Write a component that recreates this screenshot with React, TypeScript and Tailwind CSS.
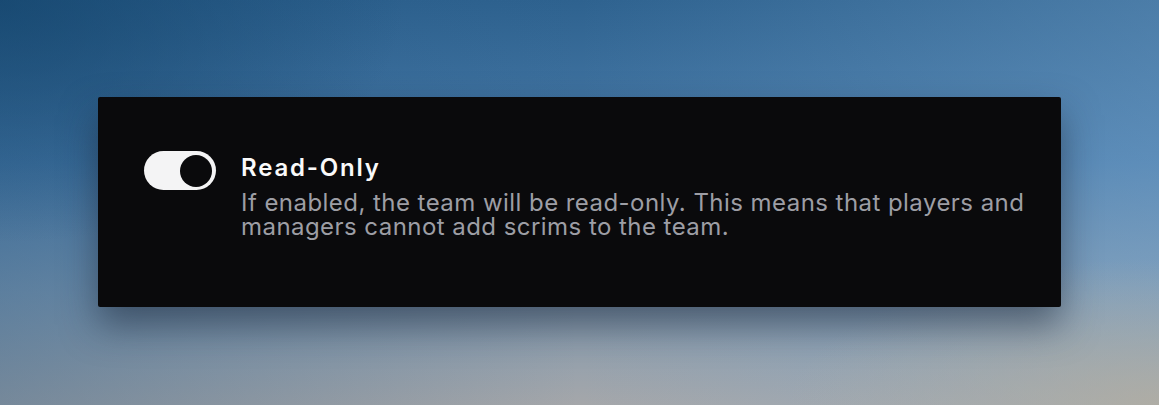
export default function App() {
  return (
    <div className="h-[405px] w-full overflow-hidden bg-[radial-gradient(ellipse_35%_60%_at_0%_0%,rgba(14,62,100,0.6),rgba(14,62,100,0)_100%),radial-gradient(ellipse_40%_45%_at_100%_100%,rgba(184,174,156,0.7),rgba(184,174,156,0)_80%),linear-gradient(90deg,rgba(30,80,125,0.35)_0%,rgba(30,80,125,0)_50%,rgba(130,175,215,0.35)_100%),linear-gradient(180deg,#2e628f_0%,#4a7caa_40%,#7e98b0_72%,#a5a7aa_100%)] font-['Inter',sans-serif]">
      <div className="flex pl-[98px] pt-[97px]">
        <div className="flex h-[210px] w-[963px] items-start gap-[25px] rounded-[2px] bg-[#0a0a0c] pl-[46px] pt-[54px] shadow-[0_18px_36px_rgba(28,38,56,0.55)]">
          <button
            type="button"
            role="switch"
            aria-checked="true"
            className="flex h-[39px] w-[72px] shrink-0 items-center justify-end rounded-full bg-[#f4f4f5] pr-[4px]"
          >
            <span className="block h-[32px] w-[32px] rounded-full bg-[#0a0a0c]" />
          </button>
          <div className="mt-[5px] flex flex-col">
            <div className="text-[24px] leading-[24px] font-semibold tracking-[1.8px] text-[#fafafa]">Read-Only</div>
            <p className="mt-[11px] w-[810px] text-[24px] leading-[24px] tracking-[0.45px] text-[#9d9ea5]">
              If enabled, the team will be read-only. This means that players and
              managers cannot add scrims to the team.
            </p>
          </div>
        </div>
      </div>
    </div>
  );
}
